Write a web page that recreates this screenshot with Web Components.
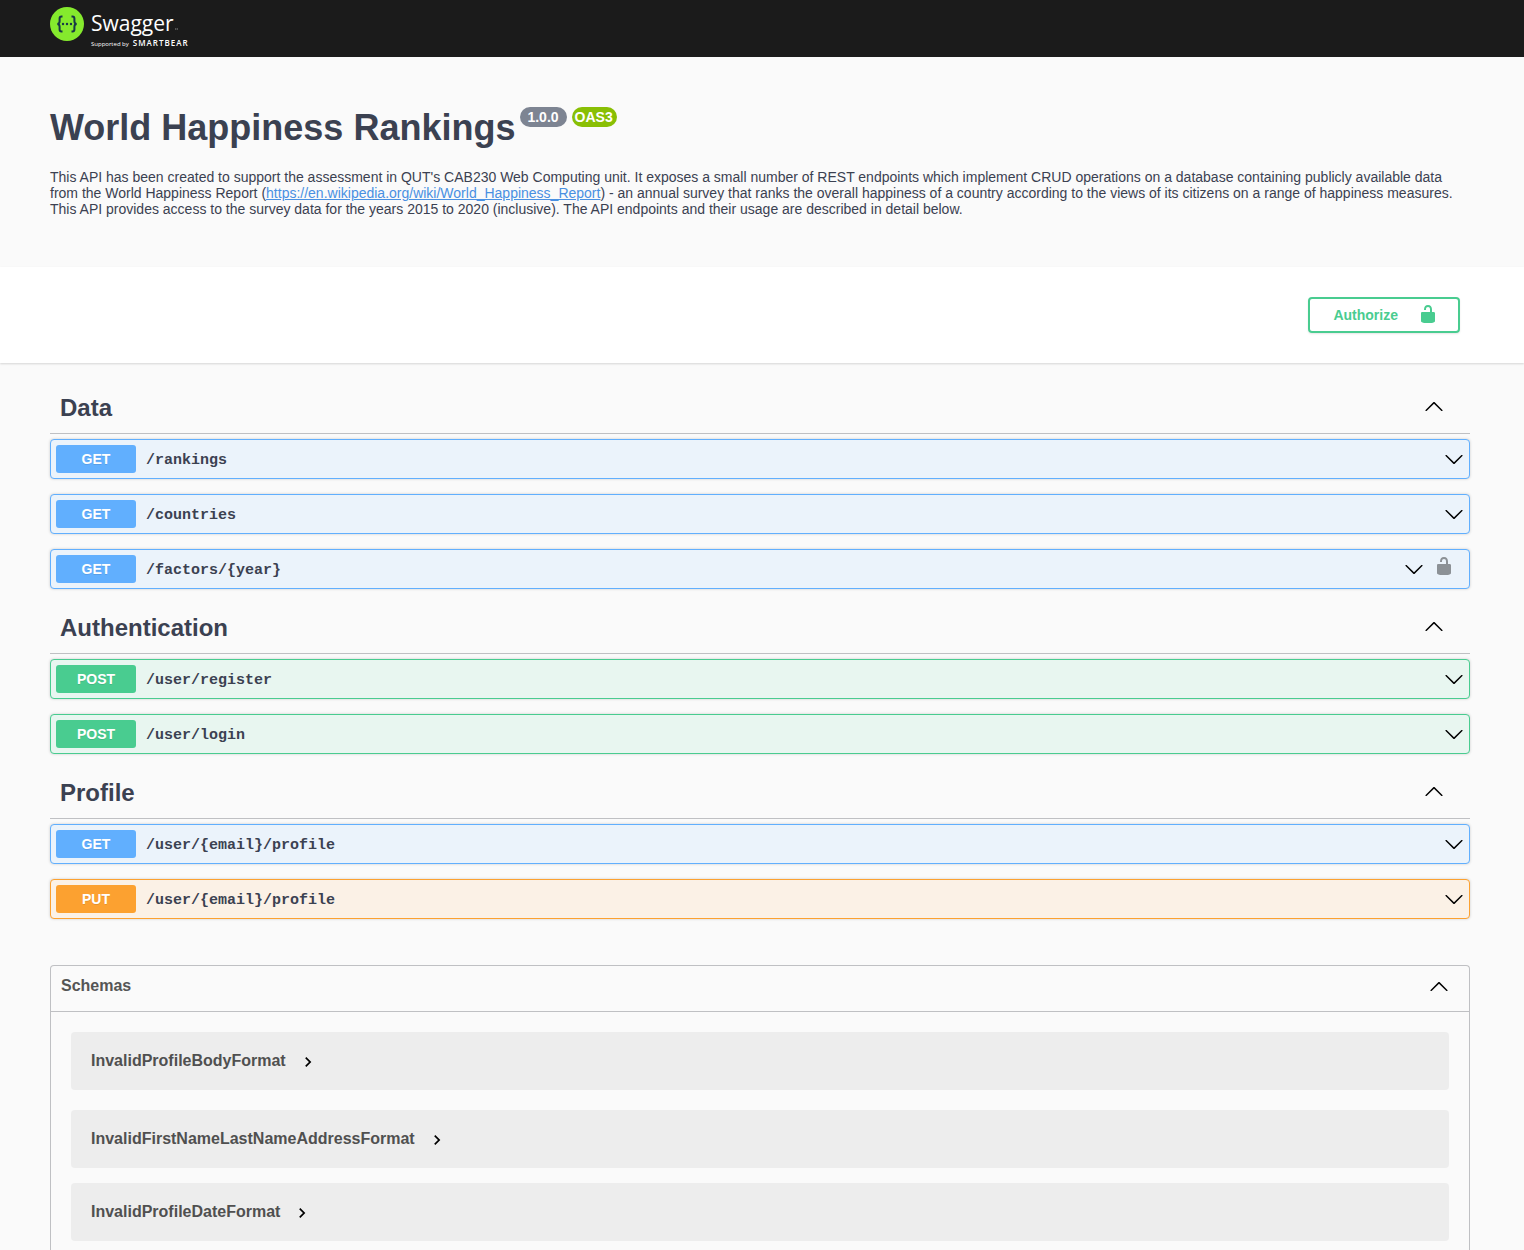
<!DOCTYPE html>
<html lang="en">
<head>
<meta charset="utf-8">
<title>Swagger UI</title>
<style>
  html { background: #fafafa; }
  body { margin: 0; min-height: 100vh; display: flex; flex-direction: column; color: #3b4151;
    font-family: "Liberation Sans", Arial, sans-serif; font-size: 14px;
    --gutter: 0 54px 0 50px; --rule: #bfc0c3; }
  main { flex: 1; display: flex; flex-direction: column; padding: var(--gutter); }
  .sections { padding-top: 21px; }
</style>
</head>
<body>
<top-bar></top-bar>
<api-info version="1.0.0" spec="OAS3">
  <span slot="title">World Happiness Rankings</span>
  This API has been created to support the assessment in QUT's CAB230 Web Computing unit. It exposes a small number of REST endpoints which implement CRUD operations on a database containing publicly available data from the World Happiness Report (<a href="https://en.wikipedia.org/wiki/World_Happiness_Report" style="color:#4990e2">https://en.wikipedia.org/wiki/World_Happiness_Report</a>) - an annual survey that ranks the overall happiness of a country according to the views of its citizens on a range of happiness measures. This API provides access to the survey data for the years 2015 to 2020 (inclusive). The API endpoints and their usage are described in detail below.
</api-info>
<scheme-bar>Authorize</scheme-bar>
<main>
  <div class="sections">
    <api-section name="Data">
      <api-operation method="get">/rankings</api-operation>
      <api-operation method="get">/countries</api-operation>
      <api-operation method="get" secured>/factors/{year}</api-operation>
    </api-section>
    <api-section name="Authentication">
      <api-operation method="post">/user/register</api-operation>
      <api-operation method="post">/user/login</api-operation>
    </api-section>
    <api-section name="Profile">
      <api-operation method="get">/user/{email}/profile</api-operation>
      <api-operation method="put">/user/{email}/profile</api-operation>
    </api-section>
  </div>
  <api-schemas>
    <schema-model>InvalidProfileBodyFormat</schema-model>
    <schema-model>InvalidFirstNameLastNameAddressFormat</schema-model>
    <schema-model>InvalidProfileDateFormat</schema-model>
  </api-schemas>
</main>
<script>
const icon = (d, box = 20) => `<svg width="20" height="20" viewBox="0 0 ${box} ${box}" aria-hidden="true"><path fill="currentColor" d="${d}"/></svg>`;
const DOWN = icon("M17.418 6.109c.272-.268.709-.268.979 0s.271.701 0 .969l-7.908 7.83c-.27.268-.707.268-.979 0l-7.908-7.83c-.27-.268-.27-.701 0-.969.271-.268.709-.268.979 0L10 13.25l7.418-7.141z");
const UP = icon("M17.418 14.908c.272.268.709.268.979 0s.271-.701 0-.969l-7.908-7.83c-.27-.268-.707-.268-.979 0l-7.908 7.83c-.27.268-.27.701 0 .969.271.268.709.268.979 0L10 7.767l7.418 7.141z");
const RIGHT = icon("M10 6L8.59 7.41 13.17 12l-4.58 4.59L10 18l6-6z", 24);
const LOCK = icon("M15.8 8H14V5.6C14 2.703 12.665 1 10 1 7.334 1 6 2.703 6 5.6V6h2v-.801C8 3.754 8.797 3 10 3c1.203 0 2 .754 2 2.199V8H4c-.553 0-1 .646-1 1.199V17c0 .549.428 1.139.951 1.307l1.197.387C5.672 18.861 6.55 19 7.1 19h5.8c.549 0 1.428-.139 1.951-.307l1.196-.387c.524-.167.953-.757.953-1.306V9.199C17 8.646 16.352 8 15.8 8z");

const BASE = `*{box-sizing:border-box} :host{display:block} svg{display:block;flex:none}
  button{font:inherit;color:inherit;background:none;border:0;margin:0;padding:0;cursor:pointer;text-align:left}`;

function component(name, render) {
  customElements.define(name, class extends HTMLElement {
    constructor() {
      super();
      this.attachShadow({ mode: "open" });
    }
    connectedCallback() {
      const t = document.createElement("template");
      t.innerHTML = render(this);
      this.shadowRoot.replaceChildren(t.content.cloneNode(true));
    }
  });
}

component("top-bar", () => `<style>${BASE}
  header{background:#1b1b1b;height:57px;padding:var(--gutter)}
  a{display:inline-flex;gap:7px;color:#fff;text-decoration:none;padding-top:7px;font-family:"Open Sans",sans-serif}
  .words{display:flex;flex-direction:column;padding-top:3px}
  .name{display:flex;align-items:flex-end;font-size:21px;line-height:27px}
  .name svg{margin:0 0 7px 1px}
  .by{display:flex;align-items:baseline;gap:4px;font-size:6px;line-height:12px}
  b{font-size:8px;font-weight:600;letter-spacing:1px}
</style>
<header><a href="#" aria-label="Swagger, supported by SmartBear">
  <svg width="34" height="34" viewBox="0 0 34 34"><circle cx="17" cy="17" r="17" fill="#85ea2d"/>
    <g fill="none" stroke="#173647" stroke-width="2"><path d="M12.5 9.5h-1c-1.3 0-1.9.8-1.9 2v2.8c0 1.5-.6 2.5-2.2 2.7 1.6.2 2.2 1.2 2.2 2.7v2.8c0 1.2.6 2 1.9 2h1M21.5 9.5h1c1.3 0 1.9.8 1.9 2v2.8c0 1.5.6 2.5 2.2 2.7-1.6.2-2.2 1.2-2.2 2.7v2.8c0 1.2-.6 2-1.9 2h-1"/></g>
    <g fill="#173647"><circle cx="13" cy="17" r="1.2"/><circle cx="17" cy="17" r="1.2"/><circle cx="21" cy="17" r="1.2"/></g></svg>
  <span class="words"><span class="name">Swagger<svg width="3" height="2" viewBox="0 0 3 2"><path stroke="#aaa" stroke-width=".8" d="M0 1h1.2M1.7 1H3"/></svg></span>
  <span class="by">Supported by <b>SMARTBEAR</b></span></span>
</a></header>`);

component("api-info", el => `<style>${BASE}
  section{padding:var(--gutter)}
  h1{display:flex;align-items:flex-start;gap:5px;margin:50px 0 21px;font-size:36px;line-height:41px}
  .badge{font-size:14px;line-height:20px;border-radius:10px;color:#fff;background:#7d8492}
  .version{padding:0 8px 0 7px}
  .spec{background:#89bf04;padding:0 4px 0 3px}
  p{margin:0 0 50px;line-height:16px}
</style>
<section><h1><slot name="title"></slot><span class="badge version">${el.getAttribute("version")}</span><span class="badge spec">${el.getAttribute("spec")}</span></h1>
<p><slot></slot></p></section>`);

component("scheme-bar", () => `<style>${BASE}
  div{display:flex;justify-content:flex-end;padding:var(--gutter);background:#fff;box-shadow:0 1px 2px rgba(0,0,0,.15)}
  button{display:flex;align-items:center;gap:20px;height:36px;margin:30px 10px;padding:0 20px 0 23px;border:2px solid #49cc90;border-radius:4px;color:#49cc90;font-weight:700;box-shadow:0 1px 2px rgba(0,0,0,.1)}
  svg{margin-bottom:2px}
</style>
<div><button type="button"><slot></slot>${LOCK}</button></div>`);

component("api-section", el => `<style>${BASE}
  h2{display:flex;align-items:center;justify-content:space-between;height:50px;margin:0 0 5px;padding:0 26px 1px 10px;border-bottom:1px solid var(--rule);font-size:24px;line-height:28px}
  button{color:#000;padding-bottom:4px}
  ::slotted(*){margin-bottom:15px}
</style>
<h2>${el.getAttribute("name")}<button type="button" aria-label="Collapse ${el.getAttribute("name")}">${UP}</button></h2>
<slot></slot>`);

component("api-operation", el => `<style>${BASE}
  .get{--c:#61affe;--bg:#ebf3fb}
  .post{--c:#49cc90;--bg:#e8f6f0}
  .put{--c:#fca130;--bg:#fbf1e6}
  .row{display:flex;height:40px;padding:0 5px;border:1px solid var(--c);border-radius:4px;background:var(--bg);box-shadow:0 0 3px rgba(0,0,0,.19)}
  .summary{flex:1;display:flex;align-items:center;gap:10px}
  .method{width:80px;line-height:28px;border-radius:3px;background:var(--c);color:#fff;font-weight:700;text-align:center;text-shadow:0 1px 0 rgba(0,0,0,.1)}
  .path{flex:1;padding-top:3px;font:700 15px/20px "Liberation Mono",monospace}
  .summary svg{color:#000}
  .auth{padding:0 10px 6px;color:#000}
  .auth svg{opacity:.4}
</style>
<div class="row ${el.getAttribute("method")}"><button type="button" class="summary"><span class="method">${el.getAttribute("method").toUpperCase()}</span><span class="path"><slot></slot></span>${DOWN}</button>${el.hasAttribute("secured") ? `<button type="button" class="auth" aria-label="Authorization">${LOCK}</button>` : ""}</div>`);

component("api-schemas", () => `<style>${BASE}
  :host{flex:1;margin-top:31px;border:1px solid var(--rule);border-bottom:0;border-radius:4px 4px 0 0}
  h2{display:flex;align-items:center;justify-content:space-between;height:46px;margin:0;padding:0 20px 5px 10px;border-bottom:1px solid var(--rule);font-size:16px;line-height:18px;color:#555}
  button{color:#000}
  ::slotted(*){margin:0 20px 15px}
  ::slotted(:first-child){margin:20px}
  ::slotted(:last-child){margin-bottom:0}
</style>
<h2>Schemas<button type="button" aria-label="Collapse schemas">${UP}</button></h2>
<slot></slot>`);

component("schema-model", () => `<style>${BASE}
  button{display:flex;align-items:center;gap:12px;width:100%;height:58px;padding:0 20px;border-radius:4px;background:#ededed;color:#505050;font-size:16px;font-weight:700}
  svg{color:#000;margin-top:2px}
</style>
<button type="button"><slot></slot>${RIGHT}</button>`);
</script>
</body>
</html>
